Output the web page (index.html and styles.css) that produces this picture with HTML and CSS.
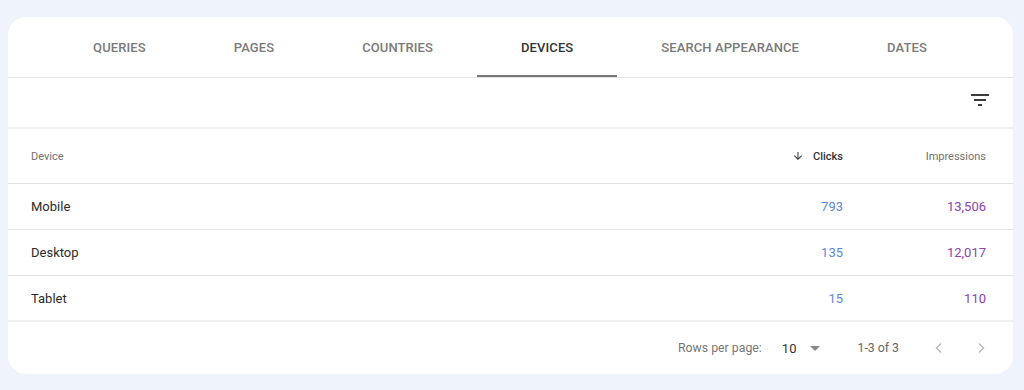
FILE: index.html
```html
<!DOCTYPE html>
<html lang="en">
<head>
    <meta charset="UTF-8">
    <title>Performance - Devices</title>
    <link rel="stylesheet" href="styles.css">
</head>
<body>
    <div class="card">
        <div class="tabs">
            <div class="tab">Queries</div>
            <div class="tab">Pages</div>
            <div class="tab">Countries</div>
            <div class="tab active">Devices</div>
            <div class="tab">Search appearance</div>
            <div class="tab">Dates</div>
        </div>

        <div class="toolbar">
            <svg class="filter-icon" width="24" height="24" viewBox="0 0 24 24">
                <path d="M10 18h4v-2h-4v2zM3 6v2h18V6H3zm3 7h12v-2H6v2z" fill="#3c3c3c"/>
            </svg>
        </div>

        <table class="data">
            <thead>
                <tr>
                    <th class="col-name">Device</th>
                    <th class="col-num sorted">
                        <svg width="12" height="12" viewBox="0 0 24 24"><path d="M20 12l-1.41-1.41L13 16.17V4h-2v12.17l-5.58-5.59L4 12l8 8 8-8z" fill="#333"/></svg>
                        Clicks
                    </th>
                    <th class="col-num col-last">Impressions</th>
                </tr>
            </thead>
            <tbody>
                <tr>
                    <td class="col-name">Mobile</td>
                    <td class="col-num clicks">793</td>
                    <td class="col-num col-last impr">13,506</td>
                </tr>
                <tr>
                    <td class="col-name">Desktop</td>
                    <td class="col-num clicks">135</td>
                    <td class="col-num col-last impr">12,017</td>
                </tr>
                <tr>
                    <td class="col-name">Tablet</td>
                    <td class="col-num clicks">15</td>
                    <td class="col-num col-last impr">110</td>
                </tr>
            </tbody>
        </table>

        <div class="pager">
            <span class="rows-label">Rows per page:</span>
            <span class="rows-select">
                10
                <svg width="10" height="5" viewBox="0 0 10 5"><path d="M0 0h10L5 5z" fill="#8a8a8a"/></svg>
            </span>
            <span class="range">1-3 of 3</span>
            <span class="nav-btn">
                <svg width="10" height="12" viewBox="0 0 10 12"><polyline points="7,1.5 2.5,6 7,10.5" fill="none" stroke="#b5b5b5" stroke-width="1.4"/></svg>
            </span>
            <span class="nav-btn">
                <svg width="10" height="12" viewBox="0 0 10 12"><polyline points="3,1.5 7.5,6 3,10.5" fill="none" stroke="#b5b5b5" stroke-width="1.4"/></svg>
            </span>
        </div>
    </div>
</body>
</html>
```

FILE: styles.css
```css
body {
    margin: 0;
    padding: 17px 11px 16px 8px;
    background-color: #eff3fb;
    font-family: Roboto, "Liberation Sans", Arial, sans-serif;
}

.card {
    background: #fff;
    border-radius: 18px;
    height: 357px;
    display: flex;
    flex-direction: column;
    overflow: hidden;
}

.tabs {
    display: flex;
    justify-content: center;
    border-bottom: 1px solid #e3e3e3;
    padding-right: 1px;
}

.tab {
    height: 56px;
    padding: 2px 44px 0;
    display: flex;
    align-items: center;
    border-bottom: 2px solid transparent;
    font-size: 13px;
    font-weight: 500;
    text-transform: uppercase;
    color: #7a7a7a;
    letter-spacing: 0.1px;
}

.tab.active {
    color: #333;
    border-bottom-color: #777;
}

.toolbar {
    height: 49px;
    display: flex;
    justify-content: flex-end;
    align-items: center;
    padding-right: 21px;
    border-bottom: 2px solid #efefef;
}

.filter-icon {
    margin-bottom: 6px;
}

.data {
    width: 100%;
    border-collapse: collapse;
    font-size: 13px;
}

.data th,
.data td {
    padding: 0;
}

.data th {
    height: 54px;
    font-size: 11px;
    font-weight: 400;
    color: #707070;
    border-bottom: 1px solid #e3e3e3;
}

.data td {
    height: 45px;
    color: #2a2a2a;
    border-bottom: 1px solid #e3e3e3;
}

.data tbody tr:last-child td {
    height: 44px;
    border-bottom: 2px solid #efefef;
}

.data .col-name {
    text-align: left;
    padding-left: 23px;
}

.data .col-num {
    text-align: right;
    width: 143px;
}

.data .col-last {
    padding-right: 27px;
}

.data th.sorted {
    color: #333;
    font-weight: 500;
}

.sorted svg {
    vertical-align: -2px;
    margin-right: 6px;
}

.data td.clicks {
    color: #5d87d6;
}

.data td.impr {
    color: #8c42b4;
}

.pager {
    flex: 1;
    display: flex;
    justify-content: flex-end;
    align-items: center;
    padding-right: 27px;
    font-size: 12px;
    color: #767676;
}

.rows-label {
    margin-right: 20px;
    font-size: 12.3px;
}

.rows-select {
    display: flex;
    align-items: center;
    gap: 14px;
    font-size: 13px;
    color: #333;
    margin-right: 37px;
}

.range {
    color: #666;
    font-size: 12.3px;
    margin-right: 35px;
}

.nav-btn {
    display: flex;
    margin-left: 32px;
}

.range + .nav-btn {
    margin-left: 0;
}
```
